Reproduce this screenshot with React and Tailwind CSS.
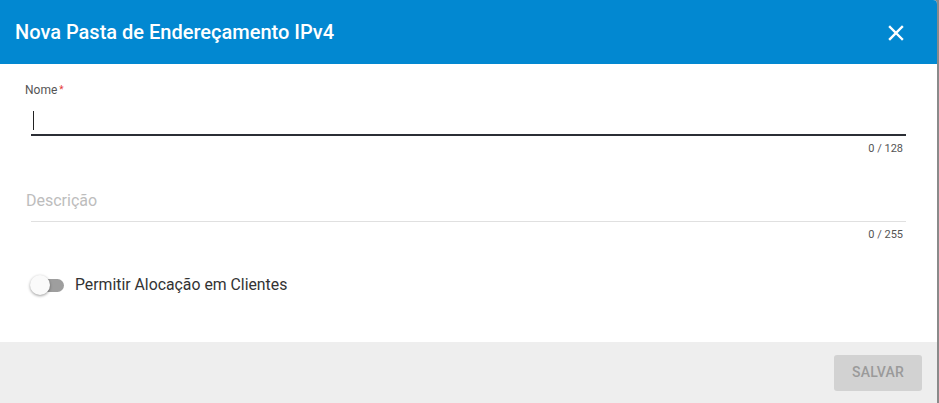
import React from "react";

export default function App() {
  return (
    <div className="w-[939px] h-[403px] flex bg-[#8a8a8a] overflow-hidden" style={{ fontFamily: "Roboto, 'Liberation Sans', sans-serif" }}>
      <div className="w-[937px] h-[403px] flex flex-col bg-white rounded-tr-[4px] overflow-hidden">
        <div className="h-[64px] shrink-0 bg-[#0288d1] flex items-center justify-between pl-[15px] pr-[33px]">
          <div className="text-white text-[20px] font-medium leading-none">Nova Pasta de Endereçamento IPv4</div>
          <svg width="16" height="16" viewBox="0 0 16 16" className="mt-[1px]">
            <path d="M2 2 L14 14 M14 2 L2 14" stroke="white" strokeWidth="2.4" strokeLinecap="square" />
          </svg>
        </div>
        <div className="flex-1 flex flex-col pl-[25px] pr-[31px]">
          <div className="pt-[19px] text-[12px] leading-[14px] text-[#555]">
            Nome<span className="text-[#e53935] ml-[2px] align-top text-[10px]">*</span>
          </div>
          <div className="ml-[6px] h-[32px] border-b-2 border-[#2b2e35] flex items-end pb-[4px] mt-[7px]">
            <div className="w-[1px] h-[19px] bg-[#222] ml-[2px]"></div>
          </div>
          <div className="text-right text-[11px] leading-[13px] text-[#555] mt-[6px] pr-[3px]">0 / 128</div>
          <div className="text-[16px] leading-[20px] text-[#bdbdbd] mt-[36px] ml-[1px]">Descrição</div>
          <div className="ml-[6px] border-b border-[#e0e0e0] mt-[10px]"></div>
          <div className="text-right text-[11px] leading-[13px] text-[#555] mt-[6px] pr-[3px]">0 / 255</div>
          <div className="flex items-center mt-[34px] ml-[5px]">
            <div className="relative w-[34px] h-[20px] flex items-center">
              <div className="w-[32px] h-[13px] rounded-full bg-[#9e9e9e] ml-[3px]"></div>
              <div className="absolute left-0 top-0 w-[20px] h-[20px] rounded-full bg-[#fafafa] shadow-[0_1px_3px_rgba(0,0,0,0.4)]"></div>
            </div>
            <div className="ml-[11px] text-[15.8px] leading-[20px] text-[#333]">Permitir Alocação em Clientes</div>
          </div>
        </div>
        <div className="h-[61px] shrink-0 bg-[#eeeeee] flex items-center justify-end pr-[15px]">
          <div className="w-[88px] h-[36px] rounded-[3px] bg-[#d2d2d2] text-[#9a9a9a] text-[14px] font-medium flex items-center justify-center tracking-[0.2px]">SALVAR</div>
        </div>
      </div>
    </div>
  );
}
